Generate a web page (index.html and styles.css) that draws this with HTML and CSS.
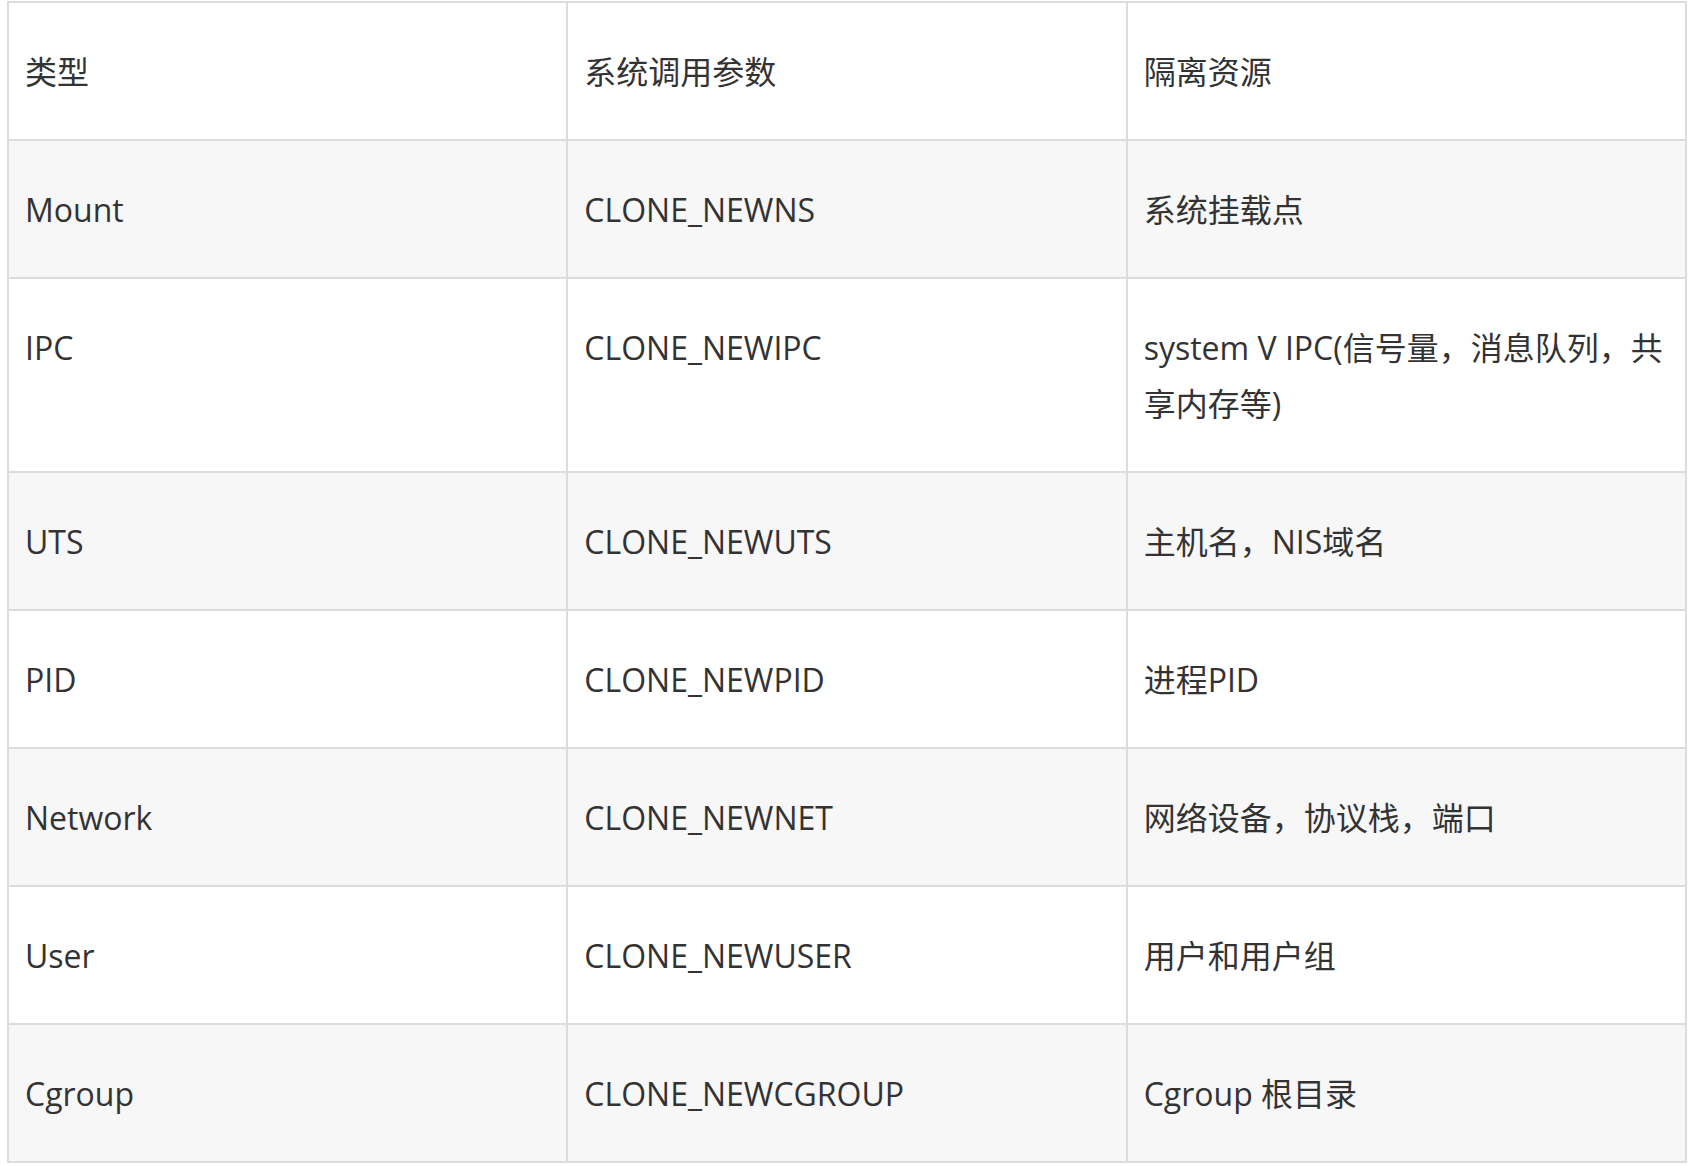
FILE: index.html
```html
<!DOCTYPE html>
<html lang="zh-CN">
<head>
<meta charset="utf-8">
<title>Namespace</title>
<link rel="stylesheet" href="styles.css">
</head>
<body>
<table class="ns-table">
  <thead>
    <tr><th>类型</th><th>系统调用参数</th><th>隔离资源</th></tr>
  </thead>
  <tbody>
    <tr><td>Mount</td><td>CLONE_NEWNS</td><td>系统挂载点</td></tr>
    <tr><td>IPC</td><td>CLONE_NEWIPC</td><td class="compact">system V IPC(信号量，消息队列，共享内存等)</td></tr>
    <tr><td>UTS</td><td>CLONE_NEWUTS</td><td>主机名，NIS域名</td></tr>
    <tr><td>PID</td><td>CLONE_NEWPID</td><td>进程PID</td></tr>
    <tr><td>Network</td><td>CLONE_NEWNET</td><td>网络设备，协议栈，端口</td></tr>
    <tr><td>User</td><td>CLONE_NEWUSER</td><td>用户和用户组</td></tr>
    <tr><td>Cgroup</td><td>CLONE_NEWCGROUP</td><td>Cgroup 根目录</td></tr>
  </tbody>
</table>
</body>
</html>
```
FILE: styles.css
```css
html, body {
  margin: 0;
  padding: 0;
  background: #ffffff;
}
body {
  padding: 1px 0 0 7px;
  font-family: "Open Sans", "Noto Sans CJK SC", sans-serif;
  font-size: 32px;
  color: #333333;
}
.ns-table {
  border-collapse: collapse;
  table-layout: fixed;
  width: 1680px;
}
.ns-table th,
.ns-table td {
  border: 2px solid #dcdcdc;
  padding: 41px 16px 39px;
  line-height: 56px;
  text-align: left;
  vertical-align: top;
  font-weight: normal;
}
.ns-table .compact {
  text-spacing-trim: space-all;
}
.ns-table tbody tr:nth-child(odd) {
  background: #f7f7f7;
}
```
